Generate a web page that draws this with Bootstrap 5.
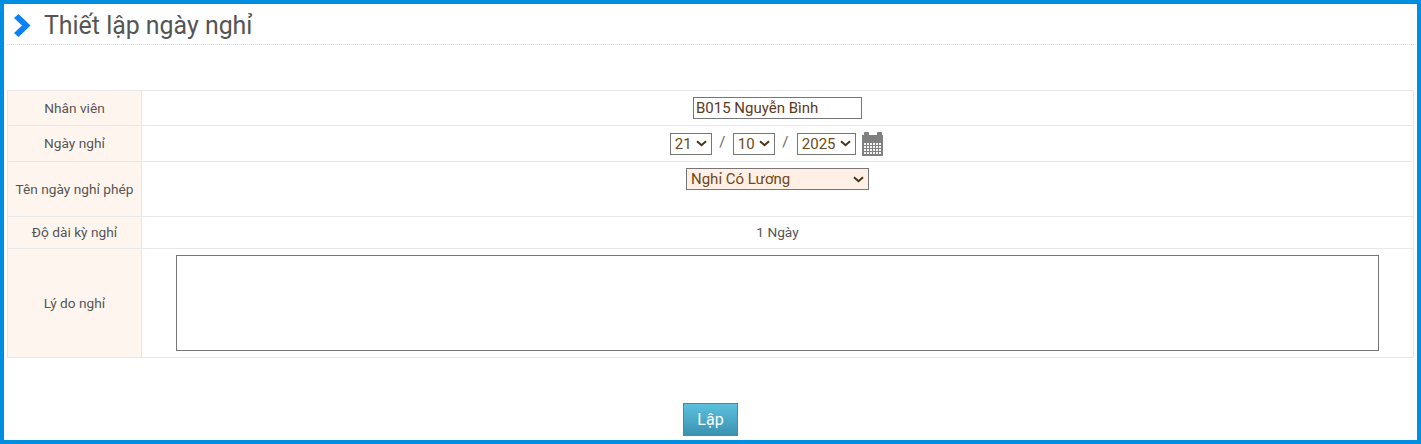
<!DOCTYPE html>
<html lang="vi">
<head>
<meta charset="utf-8">
<title>Thiết lập ngày nghỉ</title>
<link href="https://cdn.jsdelivr.net/npm/bootstrap@5.3.0/dist/css/bootstrap.min.css" rel="stylesheet">
<style>
html,body{height:100%;}
body{font-family:Roboto,"Liberation Sans",sans-serif;font-size:13.7px;color:#555;background:#fff;overflow:hidden;}
.frame{height:444px;border:4px solid #008fe0;padding:0 3px;display:flex;flex-direction:column;}
.head-bar{height:41px;border-bottom:1px dotted #ddd;display:flex;align-items:center;gap:13px;padding:3px 0 0 7px;}
.head-bar h1{font-size:24.900px;font-weight:400;color:#555;margin:0;line-height:28px;}
.form-grid{margin:45px 0 0;width:1407px;table-layout:fixed;border-collapse:collapse;}
.form-grid td{border:1px solid #e8e8e8;text-align:center;vertical-align:middle;padding:0;color:#555;}
.form-grid td.lbl{width:134px;background:#fff5ef;}
.r1{height:35px}.r2{height:36px}.r3{height:55px}.r4{height:32px}.r5{height:109px}
.form-grid td.top{vertical-align:top;padding-top:6px;}
.txt{width:169px;height:22px;border:1px solid #767676;padding:0 2px;font:15px Roboto,sans-serif;color:#5b3a1e;border-radius:0;outline:0;vertical-align:middle;}
.sel{appearance:none;-webkit-appearance:none;height:22px;border:1px solid #767676;border-radius:0;background:#fff url("data:image/svg+xml,%3Csvg xmlns='http://www.w3.org/2000/svg' width='11' height='7'%3E%3Cpath d='M1 1.200 5.500 5.200 10 1.200' fill='none' stroke='%234a3418' stroke-width='2'/%3E%3C/svg%3E") no-repeat right 4px center;font:15px Roboto,sans-serif;color:#6b4a20;padding:0 0 0 4px;vertical-align:middle;}
.s-d{width:42px}.s-y{width:59px}
.s-name{width:183px;background-color:#ffefe5;font-size:15px;height:22px;}
.slash{margin:0 5px;display:inline-block;width:11px;text-align:center;font-size:15px;color:#666;}
.slash-wide{margin-right:6px;}
.cal{vertical-align:middle;margin:0 1px 0 3px;}
.why{display:block;width:1203px;height:96px;margin:0 0 1px 34px;border:1px solid #767676;border-radius:0;outline:0;resize:none;}
.go-wrap{flex:1;display:flex;justify-content:center;align-items:flex-end;padding-bottom:4px;}
.go{width:55px;height:33px;padding:0;border:1px solid #3a8fab;border-radius:0;background:linear-gradient(#5cc0dc,#3a93b3);color:#fff;font:16px Roboto,sans-serif;}
.go:hover{color:#fff;background:linear-gradient(#5cc0dc,#3a93b3);border-color:#3a8fab;}
</style>
</head>
<body>
<div class="frame">
  <div class="head-bar">
    <svg width="17" height="23" viewBox="0 0 17 23" aria-hidden="true"><path d="M0 4 4.500 0 16.500 11.500 4.500 23 0 19 8 11.500Z" fill="#0a80fa"/></svg>
    <h1>Thiết lập ngày nghỉ</h1>
  </div>
  <table class="form-grid">
    <tr class="r1">
      <td class="lbl">Nhân viên</td>
      <td><input class="txt" type="text" value="B015 Nguyễn Bình"></td>
    </tr>
    <tr class="r2">
      <td class="lbl">Ngày nghỉ</td>
      <td>
        <select class="sel s-d"><option>21</option></select><span class="slash">/</span><select class="sel s-d"><option>10</option></select><span class="slash slash-wide">/</span><select class="sel s-y"><option>2025</option></select>
        <svg class="cal" width="22" height="24" viewBox="0 0 22 24" aria-hidden="true">
          <path fill="#808080" d="M0 3h2V1q0-1 1-1h3q1 0 1 1v2h8V1q0-1 1-1h3q1 0 1 1v2h1v21H0Z"/>
          <g fill="#f4f4f4">
            <rect x="2" y="11" width="2" height="2"/><rect x="5" y="11" width="2" height="2"/><rect x="8" y="11" width="2" height="2"/><rect x="11" y="11" width="2" height="2"/><rect x="14" y="11" width="2" height="2"/><rect x="17" y="11" width="2" height="2"/>
            <rect x="2" y="14" width="2" height="2"/><rect x="5" y="14" width="2" height="2"/><rect x="8" y="14" width="2" height="2"/><rect x="11" y="14" width="2" height="2"/><rect x="14" y="14" width="2" height="2"/><rect x="17" y="14" width="2" height="2"/>
            <rect x="2" y="17" width="2" height="2"/><rect x="5" y="17" width="2" height="2"/><rect x="8" y="17" width="2" height="2"/><rect x="11" y="17" width="2" height="2"/><rect x="14" y="17" width="2" height="2"/><rect x="17" y="17" width="2" height="2"/>
            <rect x="2" y="20" width="2" height="2"/><rect x="5" y="20" width="2" height="2"/><rect x="8" y="20" width="2" height="2"/><rect x="11" y="20" width="2" height="2"/><rect x="14" y="20" width="2" height="2"/><rect x="17" y="20" width="2" height="2"/>
          </g>
        </svg>
      </td>
    </tr>
    <tr class="r3">
      <td class="lbl">Tên ngày nghỉ phép</td>
      <td class="top"><select class="sel s-name"><option>Nghỉ Có Lương</option></select></td>
    </tr>
    <tr class="r4">
      <td class="lbl">Độ dài kỳ nghỉ</td>
      <td>1 Ngày</td>
    </tr>
    <tr class="r5">
      <td class="lbl">Lý do nghỉ</td>
      <td class="text-start"><textarea class="why"></textarea></td>
    </tr>
  </table>
  <div class="go-wrap"><button type="button" class="btn go">Lập</button></div>
</div>
<script src="https://cdn.jsdelivr.net/npm/bootstrap@5.3.0/dist/js/bootstrap.bundle.min.js"></script>
</body>
</html>
